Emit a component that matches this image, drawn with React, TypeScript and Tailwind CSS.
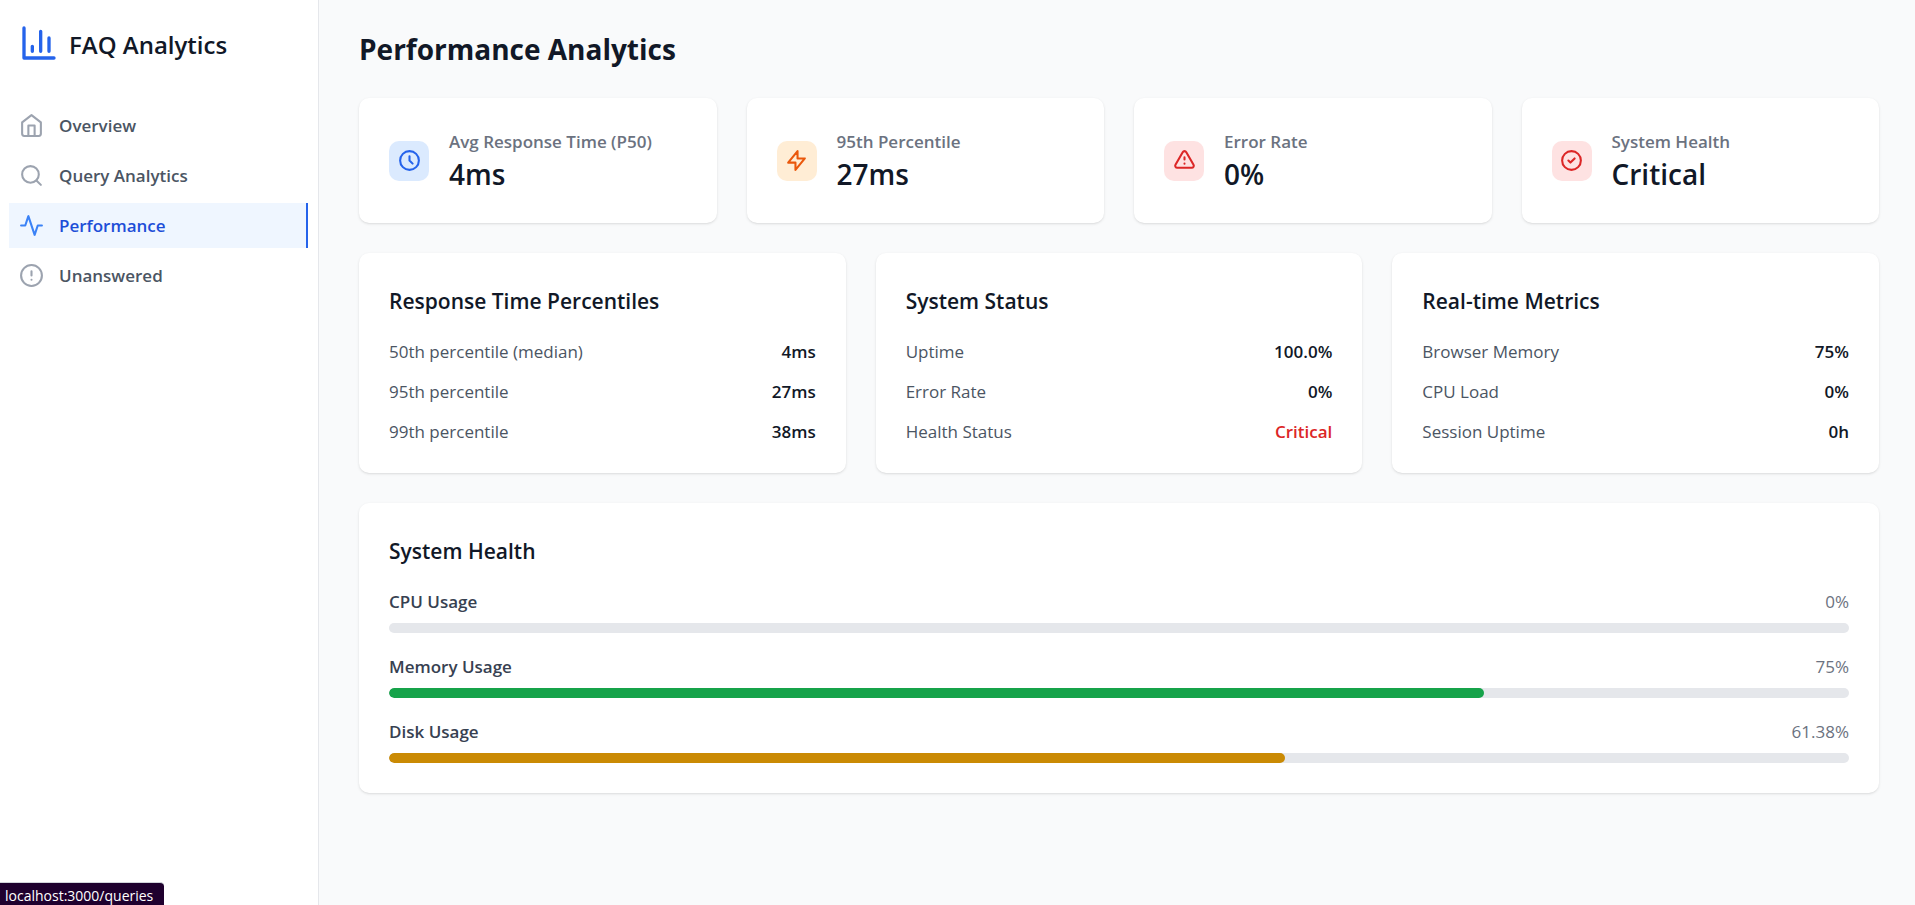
import type { ReactNode } from "react";

type IconProps = { className?: string; children: ReactNode };

function Icon({ className = "size-[25px]", children }: IconProps) {
  return (
    <svg
      className={className}
      viewBox="0 0 24 24"
      fill="none"
      stroke="currentColor"
      strokeWidth={2}
      strokeLinecap="round"
      strokeLinejoin="round"
      aria-hidden="true"
    >
      {children}
    </svg>
  );
}

const navItems = [
  {
    label: "Overview",
    href: "#overview",
    icon: (
      <>
        <path d="m3 9 9-7 9 7v11a2 2 0 0 1-2 2H5a2 2 0 0 1-2-2z" />
        <path d="M9 22V12h6v10" />
      </>
    ),
  },
  {
    label: "Query Analytics",
    href: "#queries",
    icon: (
      <>
        <circle cx="11" cy="11" r="8" />
        <path d="m21 21-4.3-4.3" />
      </>
    ),
  },
  {
    label: "Performance",
    href: "#performance",
    active: true,
    icon: <path d="M22 12h-4l-3 9L9 3l-3 9H2" />,
  },
  {
    label: "Unanswered",
    href: "#unanswered",
    icon: (
      <>
        <circle cx="12" cy="12" r="10" />
        <path d="M12 8v4M12 16h.01" />
      </>
    ),
  },
];

const stats = [
  {
    label: "Avg Response Time (P50)",
    value: "4ms",
    tone: "bg-[#dbeafe] text-[#2563eb]",
    path: "M12 8v4l3 3m6-3a9 9 0 11-18 0 9 9 0 0118 0z",
  },
  {
    label: "95th Percentile",
    value: "27ms",
    tone: "bg-[#ffedd5] text-[#ea580c]",
    path: "M13 10V3L4 14h7v7l9-11h-7z",
  },
  {
    label: "Error Rate",
    value: "0%",
    tone: "bg-[#fee2e2] text-[#dc2626]",
    path: "M12 9v2m0 4h.01m-6.938 4h13.856c1.54 0 2.502-1.667 1.732-3L13.732 4c-.77-1.333-2.694-1.333-3.464 0L3.34 16c-.77 1.333.192 3 1.732 3z",
  },
  {
    label: "System Health",
    value: "Critical",
    tone: "bg-[#fee2e2] text-[#dc2626]",
    path: "M9 12l2 2 4-4m6 2a9 9 0 11-18 0 9 9 0 0118 0z",
  },
];

type Row = { label: string; value: string; critical?: boolean };

const panels: { title: string; rows: Row[] }[] = [
  {
    title: "Response Time Percentiles",
    rows: [
      { label: "50th percentile (median)", value: "4ms" },
      { label: "95th percentile", value: "27ms" },
      { label: "99th percentile", value: "38ms" },
    ],
  },
  {
    title: "System Status",
    rows: [
      { label: "Uptime", value: "100.0%" },
      { label: "Error Rate", value: "0%" },
      { label: "Health Status", value: "Critical", critical: true },
    ],
  },
  {
    title: "Real-time Metrics",
    rows: [
      { label: "Browser Memory", value: "75%" },
      { label: "CPU Load", value: "0%" },
      { label: "Session Uptime", value: "0h" },
    ],
  },
];

const usage = [
  { label: "CPU Usage", percent: 0, color: "bg-[#16a34a]" },
  { label: "Memory Usage", percent: 75, color: "bg-[#16a34a]" },
  { label: "Disk Usage", percent: 61.38, color: "bg-[#ca8a04]" },
];

function Card({ children }: { children: ReactNode }) {
  return <section className="rounded-[10px] bg-white px-[30px] pt-[30px] pb-7 shadow-sm">{children}</section>;
}

function CardTitle({ children }: { children: ReactNode }) {
  return <h2 className="mb-[18px] text-[21px] leading-[37px] font-semibold text-[#111827]">{children}</h2>;
}

function Sidebar() {
  return (
    <aside className="flex w-[319px] shrink-0 flex-col border-r border-[#e5e7eb] bg-white">
      <div className="flex items-end gap-2.5 px-[19px] pt-[23px] pb-[22px]">
        <Icon className="size-10 text-[#2563eb]">
          <path d="M3 3v18h18M18 17V9M13 17V5M8 17v-3" />
        </Icon>
        <span className="text-2xl leading-9 font-semibold text-[#111827]">FAQ Analytics</span>
      </div>
      <nav className="mt-[18px] flex flex-col gap-[5px] pr-2.5 pl-[9px]">
        {navItems.map((item) => (
          <a
            key={item.label}
            href={item.href}
            aria-current={item.active ? "page" : undefined}
            className={
              item.active
                ? "flex h-[45px] items-center gap-[15px] border-r-2 border-[#2563eb] bg-[#eff6ff] px-2.5 text-[#1d4ed8]"
                : "flex h-[45px] items-center gap-[15px] px-2.5 text-[#4b5563]"
            }
          >
            <span className={item.active ? "text-[#3b82f6]" : "text-[#9ca3af]"}>
              <Icon>{item.icon}</Icon>
            </span>
            <span className="text-[17px] leading-[27px] font-semibold">{item.label}</span>
          </a>
        ))}
      </nav>
    </aside>
  );
}

export default function App() {
  return (
    <div className="flex min-h-screen bg-[#f9fafb] font-['Open_Sans',sans-serif]">
      <Sidebar />
      <main className="flex min-w-0 flex-1 flex-col gap-[30px] pt-[30px] pr-9 pb-10 pl-10">
        <h1 className="text-[28px] leading-[38px] font-bold text-[#111827]">Performance Analytics</h1>

        <div className="grid grid-cols-4 gap-[30px]">
          {stats.map((stat) => (
            <Card key={stat.label}>
              <div className="flex items-center gap-5 pb-0.5">
                <span className={`flex size-10 shrink-0 items-center justify-center rounded-[10px] ${stat.tone}`}>
                  <Icon>
                    <path d={stat.path} />
                  </Icon>
                </span>
                <dl className="min-w-0">
                  <dt className="text-[17px] leading-[27px] font-semibold text-[#6b7280]">{stat.label}</dt>
                  <dd className="text-[28px] leading-[38px] font-semibold text-[#111827]">{stat.value}</dd>
                </dl>
              </div>
            </Card>
          ))}
        </div>

        <div className="grid grid-cols-3 gap-[30px]">
          {panels.map((panel) => (
            <Card key={panel.title}>
              <CardTitle>{panel.title}</CardTitle>
              <dl className="flex flex-col gap-[13px] text-[17px] leading-[27px]">
                {panel.rows.map((row) => (
                  <div key={row.label} className="flex justify-between">
                    <dt className="text-[#4b5563]">{row.label}</dt>
                    <dd className={row.critical ? "font-semibold text-[#dc2626]" : "font-semibold text-[#111827]"}>
                      {row.value}
                    </dd>
                  </div>
                ))}
              </dl>
            </Card>
          ))}
        </div>

        <Card>
          <CardTitle>System Health</CardTitle>
          <div className="flex flex-col gap-5 pb-0.5">
            {usage.map((item) => (
              <div key={item.label} className="flex flex-col gap-2">
                <div className="flex justify-between text-[17px] leading-[27px]">
                  <span className="font-semibold text-[#374151]">{item.label}</span>
                  <span className="text-[#6b7280]">{item.percent}%</span>
                </div>
                <div
                  role="progressbar"
                  aria-label={item.label}
                  aria-valuenow={item.percent}
                  aria-valuemin={0}
                  aria-valuemax={100}
                  className="h-2.5 overflow-hidden rounded-full bg-[#e5e7eb]"
                >
                  <div className={`h-full rounded-full ${item.color}`} style={{ width: `${item.percent}%` }} />
                </div>
              </div>
            ))}
          </div>
        </Card>
      </main>

      <div className="fixed bottom-0 left-0 h-[23px] rounded-tr border-t border-[#d1d5db] bg-[#1f002e] pr-[11px] pl-[5px] text-sm leading-[26px] text-white">
        localhost:3000/queries
      </div>
    </div>
  );
}
